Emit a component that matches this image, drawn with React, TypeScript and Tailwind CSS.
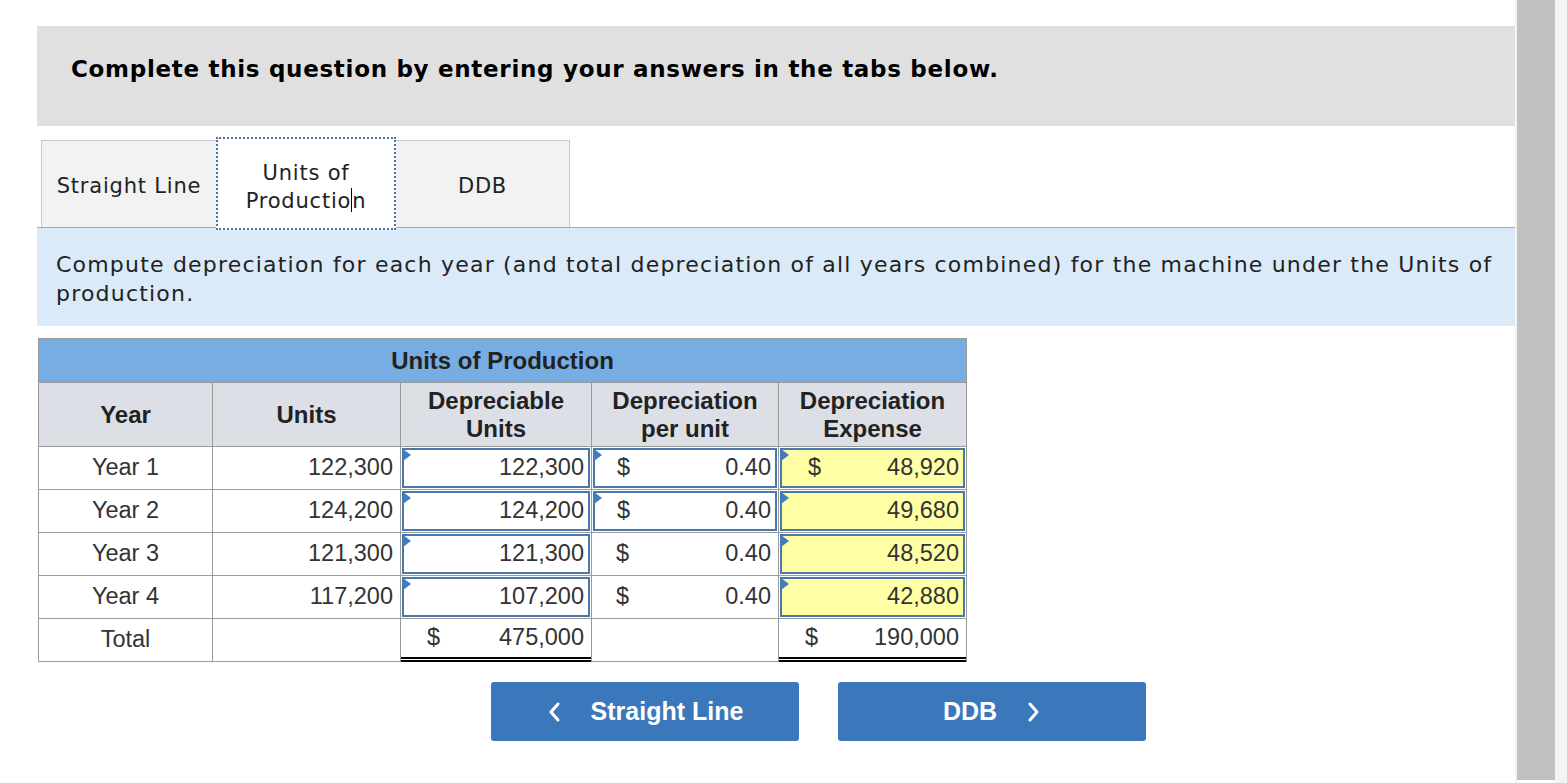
import React from "react";

const tri = (
  <span className="absolute left-[-1px] top-[-1px] w-0 h-0 border-t-[6px] border-b-[6px] border-l-[8px] border-t-transparent border-b-transparent border-l-[#3f7cc2]" />
);

function Input({ value, dollar, yellow, dollarPad = "pl-[22px]" }: { value: string; dollar?: boolean; yellow?: boolean; dollarPad?: string }) {
  return (
    <div className="h-full p-[1px]">
      <div
        className={`relative h-full border-2 border-[#4a78ac] flex items-center justify-between pr-[4px] ${dollarPad} ${yellow ? "bg-[#ffffa6]" : "bg-white"}`}
      >
        {tri}
        <span>{dollar ? "$" : ""}</span>
        <span>{value}</span>
      </div>
    </div>
  );
}

function Plain({ value, dollar, pad = "pl-[24px]" }: { value: string; dollar?: boolean; pad?: string }) {
  return (
    <div className={`h-full flex items-center justify-between pr-[7px] ${pad}`}>
      <span>{dollar ? "$" : ""}</span>
      <span>{value}</span>
    </div>
  );
}

const verdana = { fontFamily: '"DejaVu Sans", Verdana, sans-serif' };

export default function App() {
  const cell = "border-r border-b border-[#9a9a9a] h-[43px]";
  const rows = [
    { y: "Year 1", u: "122,300", d: "122,300", perIn: true, e: "48,920", ed: true },
    { y: "Year 2", u: "124,200", d: "124,200", perIn: true, e: "49,680", ed: false },
    { y: "Year 3", u: "121,300", d: "121,300", perIn: false, e: "48,520", ed: false },
    { y: "Year 4", u: "117,200", d: "107,200", perIn: false, e: "42,880", ed: false },
  ];
  return (
    <div className="w-[1567px] h-[783px] flex overflow-hidden bg-white">
      <div className="w-[1515px] pl-[37px] pt-[26px] flex flex-col">
        <div className="h-[100px] bg-[#e0e0e0] pl-[34px] pt-[30px]">
          <div className="text-[23px] leading-[27px] font-bold text-black tracking-[0.7px]" style={verdana}>
            Complete this question by entering your answers in the tabs below.
          </div>
        </div>

        <div
          className="mt-[14px] h-[88px] flex border-b border-[#a8a8a8] pl-[4px] text-[21px] text-[#222] tracking-[0.8px]"
          style={verdana}
        >
          <div className="w-[175px] bg-[#f2f2f2] border-t border-l border-[#c9c9c9] flex items-center justify-center pt-[6px]">
            Straight Line
          </div>
          <div className="relative z-10 w-[180px] h-[93px] -mt-[3px] bg-white border-2 border-dotted border-[#4f71a0] flex items-center justify-center text-center leading-[28px] pt-[6px]">
            <div>
              Units of
              <br />
              Productio<span className="inline-block w-0 h-[24px] border-l border-black align-[-4px]" />n
            </div>
          </div>
          <div className="w-[174px] bg-[#f2f2f2] border-t border-r border-[#c9c9c9] flex items-center justify-center pt-[6px]">
            DDB
          </div>
        </div>

        <div
          className="bg-[#daeaf8] h-[98px] pl-[19px] pr-[2px] pt-[22px] text-[22px] leading-[29px] text-[#222] tracking-[1.2px]"
          style={verdana}
        >
          Compute depreciation for each year (and total depreciation of all years combined) for the machine under the Units of production.
        </div>

        <div
          className="mt-[12px] ml-[1px] w-[929px] grid grid-cols-[174px_188px_191px_187px_188px] border-l border-t border-[#9a9a9a] text-[23.5px] text-[#333]"
          style={{ fontFamily: '"Liberation Sans", Arial, sans-serif' }}
        >
          <div className="col-span-5 h-[44px] bg-[#78ade3] border-r border-b border-[#9a9a9a] flex items-center justify-center font-bold text-[#222] text-[24px]">
            Units of Production
          </div>
          {[
            ["Year"],
            ["Units"],
            ["Depreciable", "Units"],
            ["Depreciation", "per unit"],
            ["Depreciation", "Expense"],
          ].map((h, i) => (
            <div key={i} className="h-[64px] bg-[#dcdfe5] border-r border-b border-[#9a9a9a] flex items-center justify-center text-center font-bold text-[#222] text-[24px] leading-[28px]">
              <div>
                {h.map((t, j) => (
                  <div key={j}>{t}</div>
                ))}
              </div>
            </div>
          ))}
          {rows.map((r) => (
            <React.Fragment key={r.y}>
              <div className={`${cell} flex items-center justify-center`}>{r.y}</div>
              <div className={`${cell} flex items-center justify-end pr-[7px]`}>{r.u}</div>
              <div className={cell}>
                <Input value={r.d} />
              </div>
              <div className={cell}>
                {r.perIn ? <Input value="0.40" dollar dollarPad="pl-[22px]" /> : <Plain value="0.40" dollar pad="pl-[24px]" />}
              </div>
              <div className={cell}>
                <Input value={r.e} dollar={r.ed} yellow dollarPad="pl-[26px]" />
              </div>
            </React.Fragment>
          ))}
          <div className={`${cell} flex items-center justify-center`}>Total</div>
          <div className={cell} />
          <div className="border-r border-[#9a9a9a] h-[43px]">
            <div className="h-full flex items-center justify-between pl-[26px] pr-[7px] border-b-[5px] border-double border-black">
              <span>$</span>
              <span>475,000</span>
            </div>
          </div>
          <div className={cell} />
          <div className="border-r border-[#9a9a9a] h-[43px]">
            <div className="h-full flex items-center justify-between pl-[26px] pr-[7px] border-b-[5px] border-double border-black">
              <span>$</span>
              <span>190,000</span>
            </div>
          </div>
        </div>

        <div
          className="mt-[20px] ml-[454px] flex gap-[39px] text-white font-bold text-[25px]"
          style={{ fontFamily: '"Liberation Sans", Arial, sans-serif' }}
        >
          <div className="w-[308px] h-[59px] rounded-[3px] bg-[#3a77bb] flex items-center justify-center gap-[30px]">
            <svg width="14" height="22" viewBox="0 0 14 22" fill="none">
              <polyline points="11,3 4,11 11,19" stroke="white" strokeWidth="3" strokeLinecap="round" strokeLinejoin="round" />
            </svg>
            <span>Straight Line</span>
          </div>
          <div className="w-[308px] h-[59px] rounded-[3px] bg-[#3a77bb] flex items-center justify-center gap-[30px]">
            <span>DDB</span>
            <svg width="14" height="22" viewBox="0 0 14 22" fill="none">
              <polyline points="3,3 10,11 3,19" stroke="white" strokeWidth="3" strokeLinecap="round" strokeLinejoin="round" />
            </svg>
          </div>
        </div>
      </div>
      <div className="w-[2px] bg-[#f4f4f4]" />
      <div className="w-[38px] h-[780px] bg-[#c1c1c1]" />
      <div className="w-[12px] bg-[#f4f4f4]" />
    </div>
  );
}
